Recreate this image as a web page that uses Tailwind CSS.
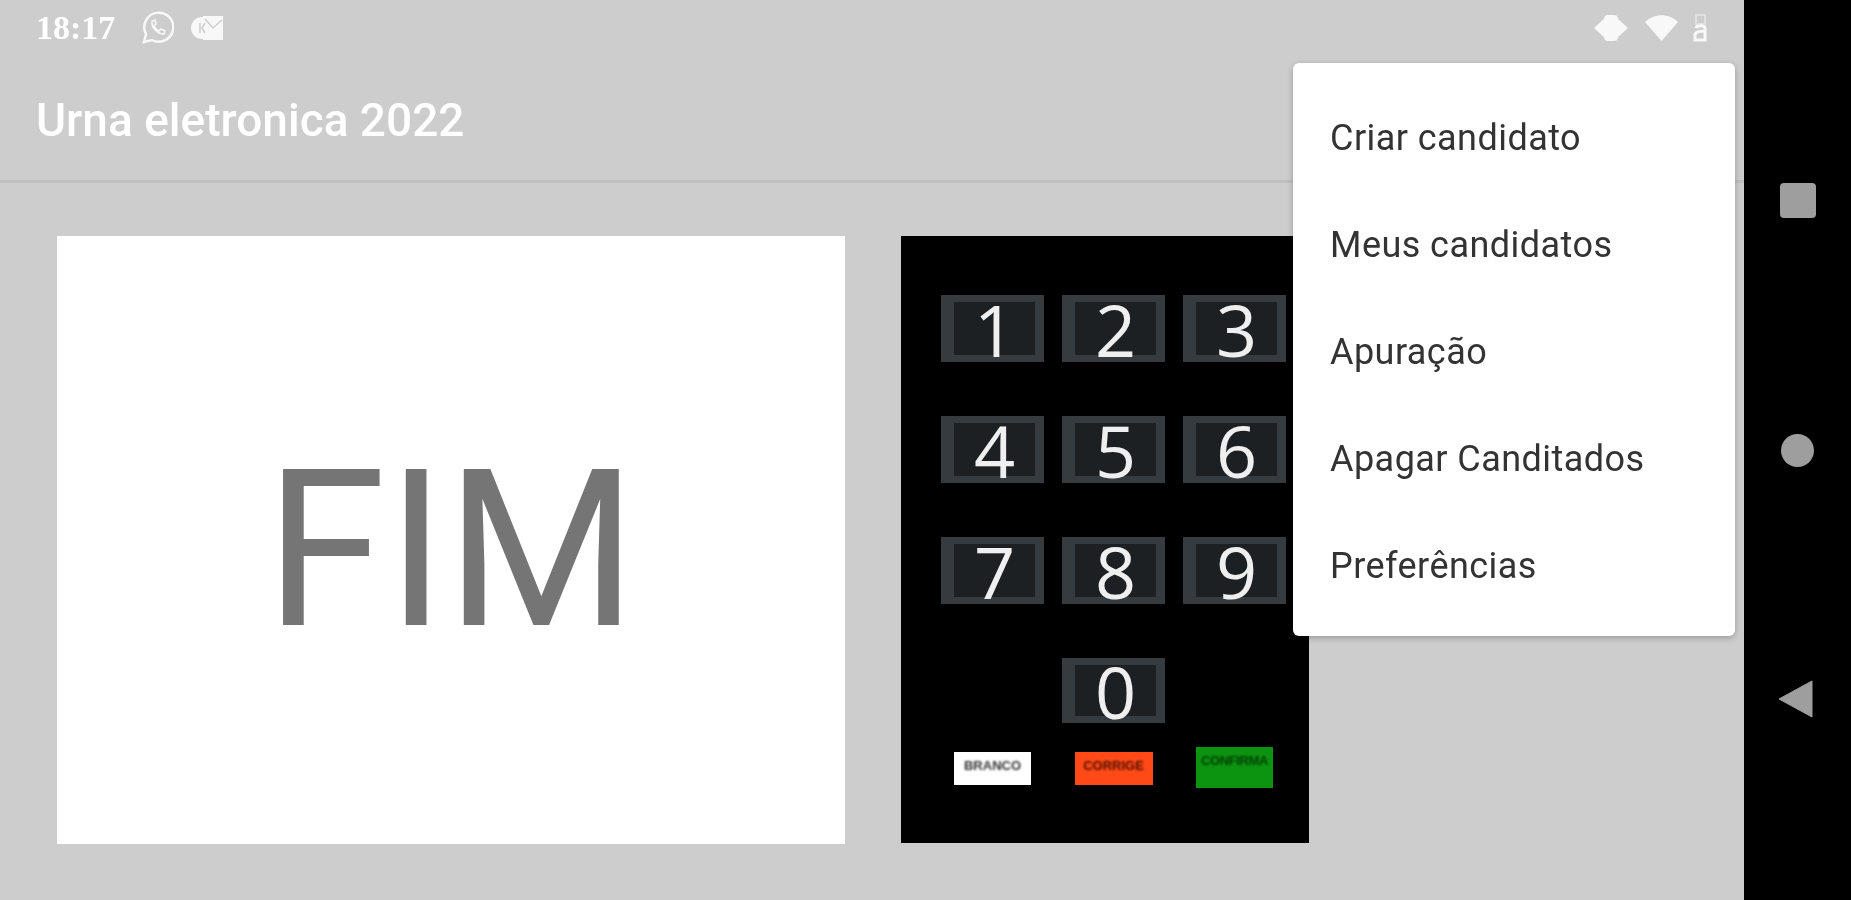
<!DOCTYPE html>
<html>
<head>
<meta charset="utf-8">
<script src="https://cdn.jsdelivr.net/npm/@tailwindcss/browser@4"></script>
</head>
<body class="m-0 bg-black">
<div class="relative flex h-[900px] w-[1851px] overflow-hidden bg-black font-['Roboto',sans-serif] blur-[0.7px]">
  <div class="flex w-[1744px] flex-col bg-[#cdcdcd]">
    <div class="flex h-[56px] shrink-0 items-center justify-between pl-[36px] pr-[36px] text-white">
      <div class="flex items-center">
        <span class="w-[105px] font-['Liberation_Serif',serif] text-[34px] font-bold leading-none">18:17</span>
        <svg class="h-[34px] w-[33px]" viewBox="0 0 33 34" fill="none" stroke="#f8f8f8" stroke-width="2.500"><path d="M3 31l2-8a14.500 14.500 0 1 1 6 6z"/><path d="M11 10c-1 6 5 13 12 13l1-3-4-2-2 2c-2-1-4-3-5-5l2-2-1-4z" stroke-width="1.500"/></svg>
        <svg class="ml-[17px] h-[28px] w-[33px]" viewBox="0 0 33 28" fill="#f8f8f8"><circle cx="11" cy="14" r="11"/><path d="M12 2h20v24H12z"/><path d="M14 5l8 9 9-8" fill="none" stroke="#cdcdcd" stroke-width="1.500"/><path d="M9 9v10M14 9l-3 5 3 5" fill="none" stroke="#cdcdcd" stroke-width="1.500"/></svg>
      </div>
      <div class="flex items-center">
        <svg class="h-[26px] w-[34px]" viewBox="0 0 34 26" fill="#f8f8f8"><rect x="10" y="0" width="14" height="26" rx="4"/><path d="M11 3L0 13l11 10zM23 3l11 10-11 10z"/></svg>
        <svg class="ml-[17px] h-[26px] w-[33px]" viewBox="0 0 33 26" fill="#f8f8f8"><path d="M16.500 26L0 7C9 -2 24 -2 33 7z"/></svg>
        <svg class="ml-[15px] h-[28px] w-[15px]" viewBox="0 0 15 28" fill="none"><path d="M3 1h9v9H3z" stroke="#f8f8f8" stroke-opacity=".45" stroke-width="2"/><path d="M3 14c1-3 8-3 9 0v12H2v-6c2-3 7-3 10-3" stroke="#f8f8f8" stroke-width="3"/></svg>
      </div>
    </div>
    <div class="flex h-[127px] shrink-0 items-center border-b-[3px] border-[#bfbfbf] pl-[36px] pt-[4px]">
      <span class="text-[46px] font-medium leading-none text-white">Urna eletronica 2022</span>
    </div>
    <div class="flex items-start pl-[57px] pt-[53px]">
      <div class="flex h-[608px] w-[788px] items-center justify-center bg-white pt-[21px]">
        <span class="text-[219px] leading-none text-[#757575]">FIM</span>
      </div>
      <div class="ml-[56px] h-[607px] w-[408px] bg-black pl-[40px] pt-[59px] font-['Open_Sans',sans-serif]">
        <div class="grid w-[346px] grid-cols-[103px_103px_103px] gap-x-[18px] gap-y-[54px]">
          <div class="flex h-[67px] items-center justify-center border-y-[7px] border-r-[9px] border-l-[13px] border-[#363b3f] bg-[#1d2023] text-[72px] leading-none text-[#efefef]">1</div>
          <div class="flex h-[67px] items-center justify-center border-y-[7px] border-r-[9px] border-l-[13px] border-[#363b3f] bg-[#1d2023] text-[72px] leading-none text-[#efefef]">2</div>
          <div class="flex h-[67px] items-center justify-center border-y-[7px] border-r-[9px] border-l-[13px] border-[#363b3f] bg-[#1d2023] text-[72px] leading-none text-[#efefef]">3</div>
          <div class="flex h-[67px] items-center justify-center border-y-[7px] border-r-[9px] border-l-[13px] border-[#363b3f] bg-[#1d2023] text-[72px] leading-none text-[#efefef]">4</div>
          <div class="flex h-[67px] items-center justify-center border-y-[7px] border-r-[9px] border-l-[13px] border-[#363b3f] bg-[#1d2023] text-[72px] leading-none text-[#efefef]">5</div>
          <div class="flex h-[67px] items-center justify-center border-y-[7px] border-r-[9px] border-l-[13px] border-[#363b3f] bg-[#1d2023] text-[72px] leading-none text-[#efefef]">6</div>
          <div class="flex h-[67px] items-center justify-center border-y-[7px] border-r-[9px] border-l-[13px] border-[#363b3f] bg-[#1d2023] text-[72px] leading-none text-[#efefef]">7</div>
          <div class="flex h-[67px] items-center justify-center border-y-[7px] border-r-[9px] border-l-[13px] border-[#363b3f] bg-[#1d2023] text-[72px] leading-none text-[#efefef]">8</div>
          <div class="flex h-[67px] items-center justify-center border-y-[7px] border-r-[9px] border-l-[13px] border-[#363b3f] bg-[#1d2023] text-[72px] leading-none text-[#efefef]">9</div>
          <div class="col-start-2 flex h-[65px] items-center justify-center border-y-[7px] border-r-[9px] border-l-[13px] border-[#363b3f] bg-[#1d2023] text-[72px] leading-none text-[#efefef]">0</div>
        </div>
        <div class="mt-[24px] grid w-[346px] grid-cols-[103px_103px_103px] items-start gap-x-[18px] font-['Liberation_Sans',sans-serif] text-[13px] font-bold leading-none">
          <div class="mx-auto mt-[5px] h-[33px] w-[77px] bg-white pt-[7px] text-center text-[#333]"><span class="block blur-[0.8px]">BRANCO</span></div>
          <div class="mx-auto mt-[5px] h-[33px] w-[78px] bg-[#ff4a17] pt-[7px] text-center text-[#4d0f00]"><span class="block blur-[0.8px]">CORRIGE</span></div>
          <div class="mx-auto h-[41px] w-[77px] whitespace-nowrap bg-[#0c9411] pt-[7px] text-center tracking-[-0.4px] text-[#033d05]"><span class="block blur-[0.8px]">CONFIRMA</span></div>
        </div>
      </div>
    </div>
  </div>
  <div class="flex flex-1 flex-col items-center pt-[183px]">
    <div class="h-[35px] w-[36px] rounded-[4px] bg-[#9e9e9e]"></div>
    <div class="mt-[216px] h-[33px] w-[33px] rounded-full bg-[#9e9e9e]"></div>
    <svg class="mr-[4px] mt-[213px] h-[38px] w-[35px]" viewBox="0 0 35 38" fill="#9e9e9e"><path d="M34 1v36L1 19z" stroke="#9e9e9e" stroke-width="1" stroke-linejoin="round"/></svg>
  </div>
  <div class="absolute left-[1293px] top-[63px] flex h-[573px] w-[442px] flex-col justify-center rounded-[6px] bg-white pl-[37px] pt-[4px] text-[36px] tracking-[0.45px] text-[#333] shadow-[0_2px_6px_rgba(0,0,0,0.25)]">
    <div class="flex h-[107px] items-center">Criar candidato</div>
    <div class="flex h-[107px] items-center">Meus candidatos</div>
    <div class="flex h-[107px] items-center">Apuração</div>
    <div class="flex h-[107px] items-center">Apagar Canditados</div>
    <div class="flex h-[107px] items-center">Preferências</div>
  </div>
</div>
</body>
</html>
